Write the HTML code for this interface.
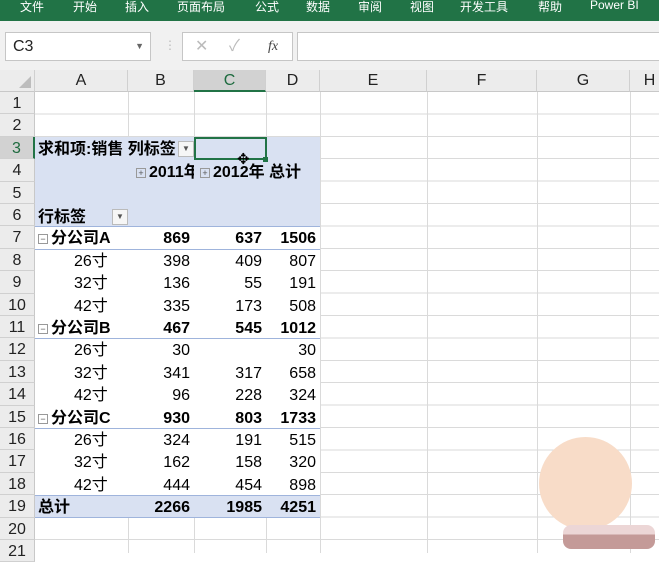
<!DOCTYPE html>
<html><head><meta charset="utf-8"><style>
*{margin:0;padding:0;box-sizing:border-box}
body{width:659px;height:553px;overflow:hidden;background:#fff;position:relative;font-family:"Liberation Sans","Noto Sans CJK SC",sans-serif;}
.a{position:absolute}
.rib{left:0;top:0;width:659px;height:21px;background:#217346;color:#fff;font-size:12px;}
.rib span{position:absolute;top:-2px}
.fb{left:0;top:21px;width:659px;height:49px;background:#f1f1f1}
.box{background:#fff;border:1px solid #c6c6c6}
.ch{top:70px;height:22px;background:#ececec;border-right:1px solid #d0d0d0;border-bottom:1px solid #c8c8c8;text-align:center;font-size:16px;line-height:22px;color:#222}
.rh{left:0;width:35px;height:22.4px;background:#ececec;border-bottom:1px solid #d0d0d0;border-right:1px solid #c8c8c8;text-align:center;font-size:16px;line-height:23px;color:#222}
.grid{left:35px;top:92px;width:624px;height:461px;background:repeating-linear-gradient(to bottom,transparent 0,transparent 21.4px,#dadada 21.4px,#dadada 22.4px)}
.vl{top:92px;width:1px;height:461px;background:#dadada}
.t{height:22.4px;line-height:25px;font-size:16px;color:#000;white-space:nowrap;overflow:hidden}
.r{text-align:right;padding-right:4px}
.b{font-weight:bold}
.blue{background:#d9e1f2}
.hl{height:1px;background:#9fb4dc;left:35px;width:285px}
.pm{display:inline-block;width:10px;height:10px;border:1px solid #999;font-size:9px;line-height:8px;text-align:center;color:#555;vertical-align:1px;margin-right:3px;font-weight:normal}
.dd{width:16px;height:16px;border:1px solid #bbb;background:#f6f6f6;font-size:8px;text-align:center;line-height:14px;color:#555}
</style></head><body>
<div class="a rib">
<span style="left:20px">文件</span><span style="left:73px">开始</span><span style="left:125px">插入</span><span style="left:177px">页面布局</span><span style="left:255px">公式</span><span style="left:306px">数据</span><span style="left:358px">审阅</span><span style="left:410px">视图</span><span style="left:460px">开发工具</span><span style="left:538px">帮助</span><span style="left:590px">Power BI</span>
</div>
<div class="a fb"></div>
<div class="a box" style="left:5px;top:32px;width:146px;height:29px;font-size:16px;line-height:27px;padding-left:7px;color:#222">C3<span class="a" style="right:6px;top:0;font-size:9px;color:#666">▼</span></div>
<div class="a" style="left:164px;top:38px;color:#bbb;font-size:12px">⋮</div>
<div class="a box" style="left:182px;top:32px;width:111px;height:29px;color:#bbb;font-size:16px;line-height:27px"><span class="a" style="left:12px">✕</span><span class="a" style="left:46px">✓</span><span class="a" style="left:85px;color:#444;font-style:italic;font-family:'Liberation Serif',serif;font-size:14px">fx</span></div>
<div class="a box" style="left:297px;top:32px;width:370px;height:29px"></div>

<div class="a ch" style="left:0;width:35px;background:#ececec"><span class="a" style="right:3px;bottom:3px;width:0;height:0;border-left:12px solid transparent;border-bottom:12px solid #bdbdbd"></span></div>
<div class="a ch" style="left:35px;width:93px">A</div>
<div class="a ch" style="left:128px;width:66px">B</div>
<div class="a ch" style="left:194px;width:72px;background:#d2d2d2;border-bottom:2px solid #217346;color:#1e6b3f">C</div>
<div class="a ch" style="left:266px;width:54px">D</div>
<div class="a ch" style="left:320px;width:107px">E</div>
<div class="a ch" style="left:427px;width:110px">F</div>
<div class="a ch" style="left:537px;width:93px">G</div>
<div class="a ch" style="left:630px;width:40px">H</div>

<div class="a grid"></div>
<div class="a vl" style="left:128px"></div><div class="a vl" style="left:194px"></div><div class="a vl" style="left:266px"></div><div class="a vl" style="left:320px"></div><div class="a vl" style="left:427px"></div><div class="a vl" style="left:537px"></div><div class="a vl" style="left:630px"></div>

<div class="a blue" style="left:35px;top:136.8px;width:285px;height:89.6px"></div>
<div class="a" style="left:35px;top:226.4px;width:285px;height:268.8px;background:#fff"></div>
<div class="a blue" style="left:35px;top:495.2px;width:285px;height:22.4px"></div>
<div class="a hl" style="top:226px"></div>
<div class="a hl" style="top:248.5px"></div>
<div class="a hl" style="top:338px"></div>
<div class="a hl" style="top:427.5px"></div>
<div class="a hl" style="top:495px"></div>
<div class="a hl" style="top:517px"></div>

<div class="a rh" style="top:92px">1</div><div class="a rh" style="top:114.4px">2</div><div class="a rh" style="top:136.8px;background:#d2d2d2;border-right:2px solid #217346;color:#1e6b3f">3</div><div class="a rh" style="top:159.2px">4</div><div class="a rh" style="top:181.6px">5</div><div class="a rh" style="top:204px">6</div><div class="a rh" style="top:226.4px">7</div><div class="a rh" style="top:248.8px">8</div><div class="a rh" style="top:271.2px">9</div><div class="a rh" style="top:293.6px">10</div><div class="a rh" style="top:316px">11</div><div class="a rh" style="top:338.4px">12</div><div class="a rh" style="top:360.8px">13</div><div class="a rh" style="top:383.2px">14</div><div class="a rh" style="top:405.6px">15</div><div class="a rh" style="top:428px">16</div><div class="a rh" style="top:450.4px">17</div><div class="a rh" style="top:472.8px">18</div><div class="a rh" style="top:495.2px">19</div><div class="a rh" style="top:517.6px">20</div><div class="a rh" style="top:540px">21</div>

<div class="a t b" style="left:38px;top:137px;width:140px">求和项:销售 列标签</div>
<div class="a dd" style="left:178px;top:141px">▼</div>
<div class="a t b" style="left:136px;top:160px;width:58px"><span class="pm">+</span>2011年</div>
<div class="a t b" style="left:200px;top:160px;width:120px"><span class="pm">+</span>2012年 总计</div>
<div class="a t b" style="left:38px;top:205px">行标签</div>
<div class="a dd" style="left:112px;top:209px">▼</div>

<div class="a" style="left:194px;top:137px;width:73px;height:23px;border:2px solid #217346"></div>
<div class="a" style="left:263px;top:157px;width:5px;height:5px;background:#217346"></div>
<div class="a" style="left:237px;top:150px;font-size:15px;color:#000">✥</div>

<div class="a t b" style="left:38px;top:226.4px"><span class="pm">−</span>分公司A</div>
<div class="a t b r" style="left:128px;top:226.4px;width:66px">869</div><div class="a t b r" style="left:194px;top:226.4px;width:72px">637</div><div class="a t b r" style="left:266px;top:226.4px;width:54px">1506</div>
<div class="a t" style="left:74px;top:248.8px">26寸</div><div class="a t r" style="left:128px;top:248.8px;width:66px">398</div><div class="a t r" style="left:194px;top:248.8px;width:72px">409</div><div class="a t r" style="left:266px;top:248.8px;width:54px">807</div>
<div class="a t" style="left:74px;top:271.2px">32寸</div><div class="a t r" style="left:128px;top:271.2px;width:66px">136</div><div class="a t r" style="left:194px;top:271.2px;width:72px">55</div><div class="a t r" style="left:266px;top:271.2px;width:54px">191</div>
<div class="a t" style="left:74px;top:293.6px">42寸</div><div class="a t r" style="left:128px;top:293.6px;width:66px">335</div><div class="a t r" style="left:194px;top:293.6px;width:72px">173</div><div class="a t r" style="left:266px;top:293.6px;width:54px">508</div>
<div class="a t b" style="left:38px;top:316px"><span class="pm">−</span>分公司B</div>
<div class="a t b r" style="left:128px;top:316px;width:66px">467</div><div class="a t b r" style="left:194px;top:316px;width:72px">545</div><div class="a t b r" style="left:266px;top:316px;width:54px">1012</div>
<div class="a t" style="left:74px;top:338.4px">26寸</div><div class="a t r" style="left:128px;top:338.4px;width:66px">30</div><div class="a t r" style="left:266px;top:338.4px;width:54px">30</div>
<div class="a t" style="left:74px;top:360.8px">32寸</div><div class="a t r" style="left:128px;top:360.8px;width:66px">341</div><div class="a t r" style="left:194px;top:360.8px;width:72px">317</div><div class="a t r" style="left:266px;top:360.8px;width:54px">658</div>
<div class="a t" style="left:74px;top:383.2px">42寸</div><div class="a t r" style="left:128px;top:383.2px;width:66px">96</div><div class="a t r" style="left:194px;top:383.2px;width:72px">228</div><div class="a t r" style="left:266px;top:383.2px;width:54px">324</div>
<div class="a t b" style="left:38px;top:405.6px"><span class="pm">−</span>分公司C</div>
<div class="a t b r" style="left:128px;top:405.6px;width:66px">930</div><div class="a t b r" style="left:194px;top:405.6px;width:72px">803</div><div class="a t b r" style="left:266px;top:405.6px;width:54px">1733</div>
<div class="a t" style="left:74px;top:428px">26寸</div><div class="a t r" style="left:128px;top:428px;width:66px">324</div><div class="a t r" style="left:194px;top:428px;width:72px">191</div><div class="a t r" style="left:266px;top:428px;width:54px">515</div>
<div class="a t" style="left:74px;top:450.4px">32寸</div><div class="a t r" style="left:128px;top:450.4px;width:66px">162</div><div class="a t r" style="left:194px;top:450.4px;width:72px">158</div><div class="a t r" style="left:266px;top:450.4px;width:54px">320</div>
<div class="a t" style="left:74px;top:472.8px">42寸</div><div class="a t r" style="left:128px;top:472.8px;width:66px">444</div><div class="a t r" style="left:194px;top:472.8px;width:72px">454</div><div class="a t r" style="left:266px;top:472.8px;width:54px">898</div>
<div class="a t b" style="left:38px;top:495.2px">总计</div>
<div class="a t b r" style="left:128px;top:495.2px;width:66px">2266</div><div class="a t b r" style="left:194px;top:495.2px;width:72px">1985</div><div class="a t b r" style="left:266px;top:495.2px;width:54px">4251</div>

<div class="a" style="left:539px;top:437px;width:93px;height:93px;border-radius:50%;background:#f8dcc8"></div>
<div class="a" style="left:563px;top:525px;width:92px;height:24px;border-radius:8px;background:linear-gradient(#ecd6d6 40%,#c49a98 40%)"></div>
</body></html>
